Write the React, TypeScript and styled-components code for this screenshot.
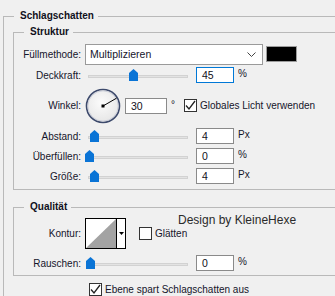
import styled, { createGlobalStyle } from 'styled-components';

const GlobalStyle = createGlobalStyle`
  html, body {
    margin: 0;
    padding: 0;
    overflow: hidden;
    background: #f0f0f0;
  }
  body {
    font-family: "Liberation Sans", Arial, sans-serif;
    font-size: 10px;
    color: #15152b;
  }
`;

const Page = styled.div`
  width: 335px;
  height: 296px;
  overflow: hidden;
  padding: 9px 0 0 3px;
  box-sizing: border-box;
`;

const Group = styled.fieldset<{ $pad: string; $mt?: number }>`
  margin: ${p => p.$mt ?? 0}px 0 0 0;
  min-width: 0;
  width: 400px;
  box-sizing: border-box;
  border: 1px solid #b9b9b9;
  padding: ${p => p.$pad};
`;

const Legend = styled.legend<{ $indent: number }>`
  margin-left: ${p => p.$indent}px;
  padding: 0 4px 0 6px;
  font-weight: bold;
  font-size: 10px;
  line-height: 14px;
  color: #101020;
`;

const Row = styled.div<{ $h: number; $mt?: number; $ml?: number }>`
  position: relative;
  display: flex;
  align-items: center;
  height: ${p => p.$h}px;
  margin-top: ${p => p.$mt ?? 0}px;
  margin-left: ${p => p.$ml ?? 0}px;
`;

const Label = styled.span`
  flex: none;
  width: 67px;
  margin-right: 4px;
  text-align: right;
  white-space: nowrap;
`;

const Select = styled.div`
  flex: none;
  width: 178px;
  height: 21px;
  box-sizing: border-box;
  background: #fff;
  border: 1px solid #9a9a9a;
  display: flex;
  align-items: center;
  justify-content: space-between;
  padding: 0 6px 0 4px;
  font-size: 10.5px;
`;

const Swatch = styled.div`
  flex: none;
  width: 31px;
  height: 16px;
  margin-left: 3px;
  box-sizing: border-box;
  background: #000;
  border: 1px solid #9c9c9c;
`;

const Slider = styled.div`
  position: relative;
  flex: none;
  width: 108px;
  height: 18px;
  display: flex;
  align-items: center;
`;

const Track = styled.div`
  flex: 1;
  margin: 2px 5px 0 3px;
  height: 3px;
  box-sizing: border-box;
  background: #e3e3e3;
  border: 1px solid #d2d2d2;
`;

const Thumb = styled.svg<{ $x: number }>`
  position: absolute;
  top: 3px;
  left: ${p => p.$x}px;
`;

const Field = styled.div<{ $ml?: number }>`
  flex: none;
  display: flex;
  align-items: flex-start;
  margin-left: ${p => p.$ml ?? 3}px;
`;

const NumBox = styled.div<{ $w?: number; $focus?: boolean }>`
  flex: none;
  width: ${p => p.$w ?? 38}px;
  height: 16px;
  box-sizing: border-box;
  background: #fff;
  border: 1px solid ${p => (p.$focus ? '#0078d7' : '#8a8a8a')};
  padding-left: 5px;
  display: flex;
  align-items: center;
  font-size: 10.5px;
  color: #101020;
`;

const Unit = styled.span`
  margin: 1px 0 0 4px;
  line-height: 11px;
`;

const Dial = styled.svg`
  flex: none;
  display: block;
`;

const Box = styled.span<{ $ml?: number }>`
  flex: none;
  width: 13px;
  height: 13px;
  margin-left: ${p => p.$ml ?? 0}px;
  margin-right: 3px;
  box-sizing: border-box;
  background: #fff;
  border: 1px solid #333;
  display: flex;
  align-items: center;
  justify-content: center;
`;

const Contour = styled.div`
  flex: none;
  width: 41px;
  height: 31px;
  box-sizing: border-box;
  border: 1px solid #000;
  background: #fff;
  display: flex;
`;

const Preview = styled.svg`
  display: block;
  flex: none;
  border-right: 1px solid #000;
`;

const Arrow = styled.div`
  flex: 1;
  display: flex;
  align-items: center;
  justify-content: center;
`;

const Watermark = styled.span`
  position: absolute;
  left: 164px;
  top: -5px;
  font-size: 12px;
  line-height: 14px;
  color: #2a2a2a;
  white-space: nowrap;
`;

function ThumbIcon({ x }: { x: number }) {
  return (
    <Thumb $x={x} width="9" height="12" viewBox="0 0 9 12">
      <path d="M4.5 0 L9 4 L9 12 L0 12 L0 4 Z" fill="#0a74d6" />
    </Thumb>
  );
}

function Range({ x }: { x: number }) {
  return (
    <Slider>
      <Track />
      <ThumbIcon x={x} />
    </Slider>
  );
}

function NumField({ value, unit, w, ml, focus }: { value: string; unit: string; w?: number; ml?: number; focus?: boolean }) {
  return (
    <Field $ml={ml}>
      <NumBox $w={w} $focus={focus}>{value}</NumBox>
      <Unit>{unit}</Unit>
    </Field>
  );
}

function CheckBox({ checked, ml }: { checked?: boolean; ml?: number }) {
  return (
    <Box $ml={ml}>
      {checked && (
        <svg width="11" height="11" viewBox="0 0 11 11">
          <path d="M1 5.5 L4 9 L10 1" fill="none" stroke="#222" strokeWidth="1.3" />
        </svg>
      )}
    </Box>
  );
}

export default function App() {
  return (
    <>
      <GlobalStyle />
      <Page>
        <Group $pad="0 0 40px 9px">
          <Legend $indent={1}>Schlagschatten</Legend>
          <Group $pad="5px 0 4px 0" $mt={2}>
            <Legend $indent={10}>Struktur</Legend>
            <Row $h={20}>
              <Label>Füllmethode:</Label>
              <Select>
                <span>Multiplizieren</span>
                <svg width="9" height="5" viewBox="0 0 9 5">
                  <path d="M0.5 0.5 L4.5 4.5 L8.5 0.5" fill="none" stroke="#444" strokeWidth="1" />
                </svg>
              </Select>
              <Swatch />
            </Row>
            <Row $h={18} $mt={2}>
              <Label>Deckkraft:</Label>
              <Range x={44} />
              <NumField value="45" unit="%" focus />
            </Row>
            <Row $h={35} $mt={4}>
              <Label>Winkel:</Label>
              <Dial width="36" height="36" viewBox="0 0 36 36">
                <defs>
                  <radialGradient id="dialFill" cx="0.45" cy="0.4" r="0.6">
                    <stop offset="0" stopColor="#fbfbfb" />
                    <stop offset="1" stopColor="#e6e6e6" />
                  </radialGradient>
                </defs>
                <circle cx="18" cy="18" r="16.5" fill="url(#dialFill)" stroke="#3d4a6c" strokeWidth="1.6" />
                <circle cx="18" cy="18" r="15.2" fill="none" stroke="#c4c8d4" strokeWidth="0.8" />
                <line x1="18" y1="18" x2="31.5" y2="10.2" stroke="#000" strokeWidth="1" />
                <rect x="16.5" y="16.5" width="3" height="3" fill="#000" />
              </Dial>
              <NumField value="30" unit="°" w={42} ml={4} />
              <CheckBox checked ml={9} />
              <span>Globales Licht verwenden</span>
            </Row>
            <Row $h={18} $mt={4}>
              <Label>Abstand:</Label>
              <Range x={5} />
              <NumField value="4" unit="Px" />
            </Row>
            <Row $h={18} $mt={2}>
              <Label>Überfüllen:</Label>
              <Range x={0} />
              <NumField value="0" unit="%" />
            </Row>
            <Row $h={18} $mt={2}>
              <Label>Größe:</Label>
              <Range x={5} />
              <NumField value="4" unit="Px" />
            </Row>
          </Group>
          <Group $pad="4px 0 3px 0" $mt={10}>
            <Legend $indent={10}>Qualität</Legend>
            <Row $h={31}>
              <Label>Kontur:</Label>
              <Contour>
                <Preview width="30" height="29" viewBox="0 0 30 29">
                  <polygon points="0,29 30,0 30,29" fill="#a3a3a3" />
                </Preview>
                <Arrow>
                  <svg width="5" height="3" viewBox="0 0 5 3">
                    <polygon points="0,0 5,0 2.5,3" fill="#000" />
                  </svg>
                </Arrow>
              </Contour>
              <CheckBox ml={13} />
              <span>Glätten</span>
              <Watermark>Design by KleineHexe</Watermark>
            </Row>
            <Row $h={18} $mt={5}>
              <Label>Rauschen:</Label>
              <Range x={1} />
              <NumField value="0" unit="%" />
            </Row>
          </Group>
          <Row $h={14} $mt={6} $ml={76}>
            <CheckBox checked />
            <span>Ebene spart Schlagschatten aus</span>
          </Row>
        </Group>
      </Page>
    </>
  );
}
